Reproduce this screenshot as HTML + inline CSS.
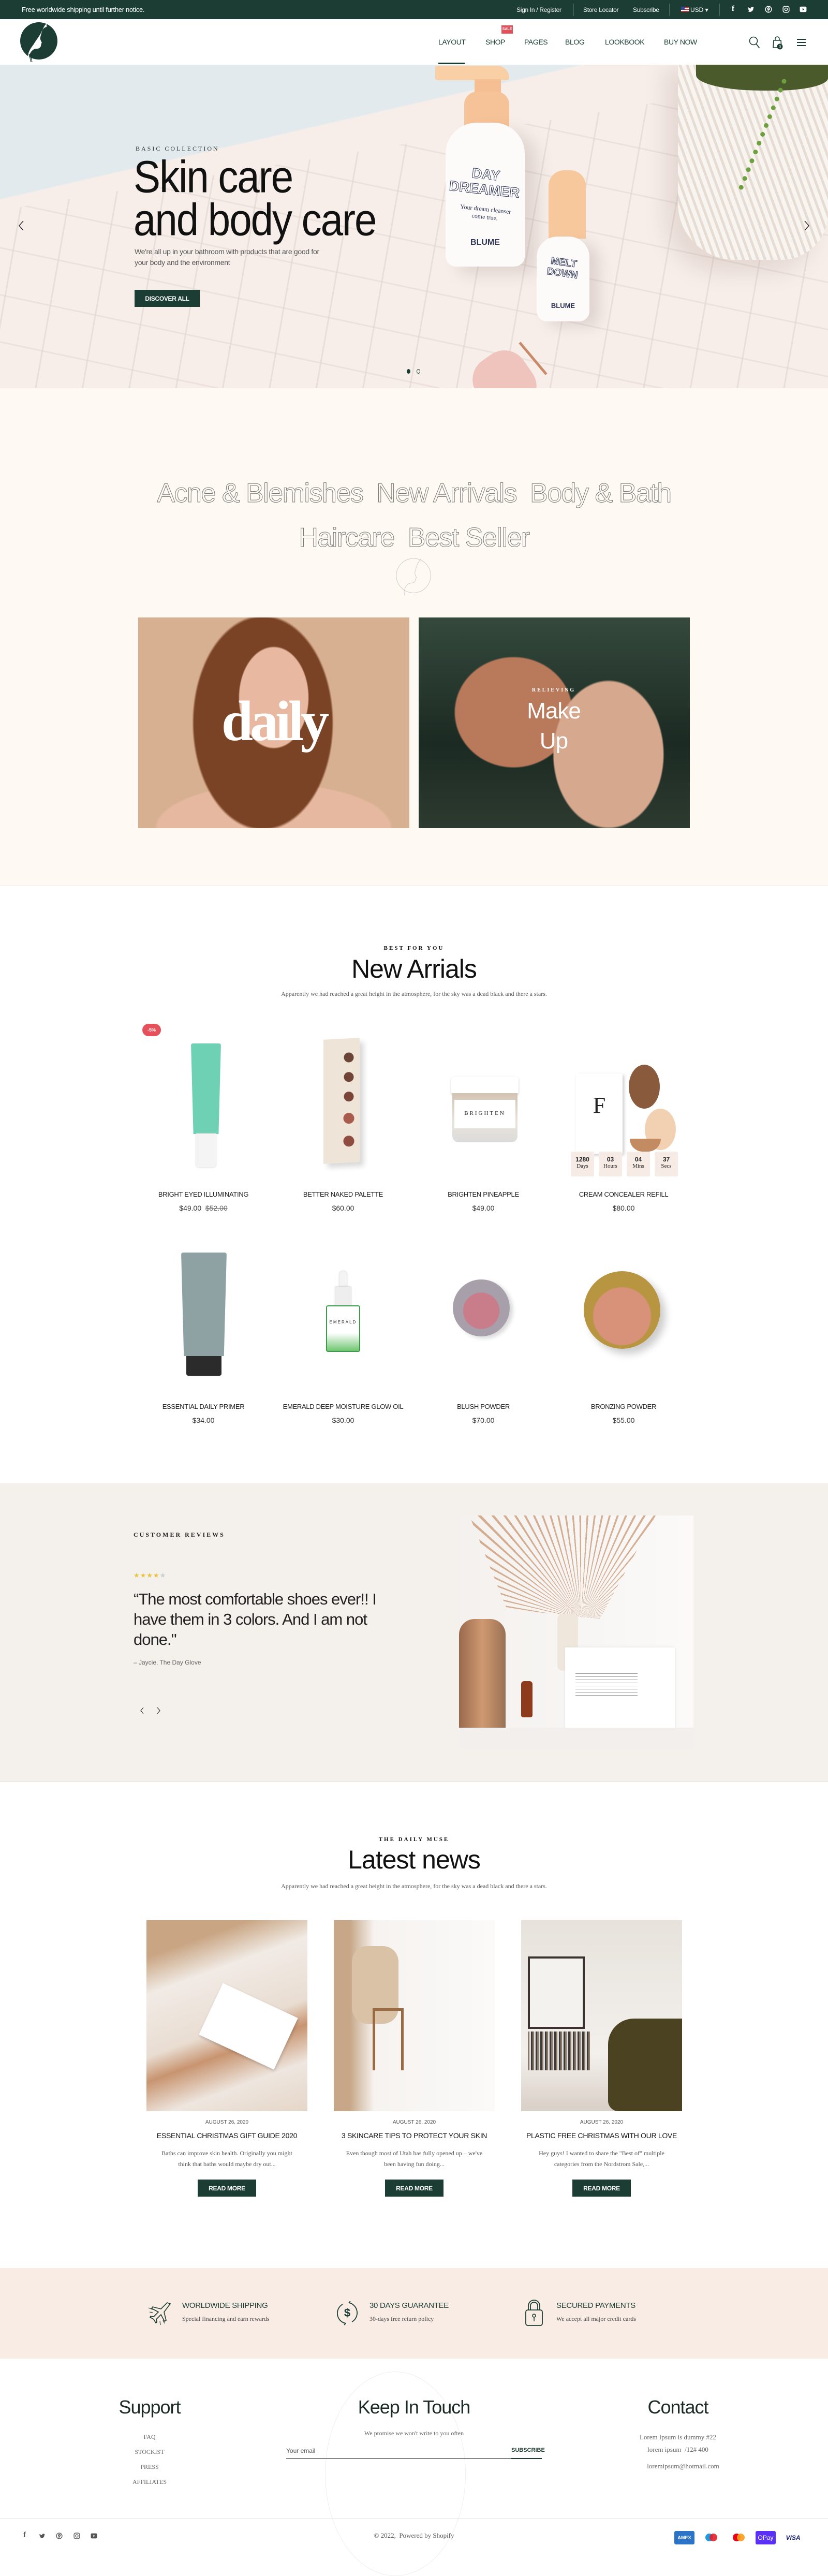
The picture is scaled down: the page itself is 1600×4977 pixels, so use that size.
<!DOCTYPE html>
<html><head><meta charset="utf-8">
<style>
*{margin:0;padding:0;box-sizing:border-box}
body{width:1600px;height:4940px;position:relative;background:#fff;font-family:"Liberation Sans",sans-serif;color:#222;overflow:hidden}
.a{position:absolute}
.c{text-align:center}
.n{font-family:"Liberation Sans",sans-serif;letter-spacing:-1px}
.btn{position:absolute;background:#1b3d33;color:#fff;font-weight:bold;font-size:12px;display:flex;align-items:center;justify-content:center;letter-spacing:-.3px}
.pn{position:absolute;width:270px;text-align:center;font-size:13px;color:#222;text-transform:uppercase;white-space:nowrap;letter-spacing:-.3px}
.pp{position:absolute;width:270px;text-align:center;font-size:14px;color:#333}
.cd{position:absolute;top:2225px;width:45px;height:48px;background:#f7ebe5;border-radius:3px;text-align:center;font-family:"Liberation Serif",serif;font-size:11px}
.cd b{display:block;margin-top:8px;font-size:12px;font-family:"Liberation Sans",sans-serif}
.ft{font-size:12px;color:#444}
.bt{position:absolute;width:331px;text-align:center;font-size:14px;color:#111;white-space:nowrap;letter-spacing:-.3px}
</style></head><body>

<!-- top bar -->
<div class="a" style="left:0;top:0;width:1600px;height:37px;background:#1b3d33"></div>
<div class="a" style="left:42px;top:11px;color:#fff;font-size:13px;letter-spacing:-.3px">Free worldwide shipping until further notice.</div>
<div class="a" style="left:998px;top:12px;color:#fff;font-size:12px;letter-spacing:-.3px">Sign In / Register</div>
<div class="a" style="left:1108px;top:7px;width:1px;height:24px;background:#4d6a60"></div>
<div class="a" style="left:1127px;top:12px;color:#fff;font-size:12px;letter-spacing:-.3px">Store Locator</div>
<div class="a" style="left:1223px;top:12px;color:#fff;font-size:12px;letter-spacing:-.3px">Subscribe</div>
<div class="a" style="left:1293px;top:7px;width:1px;height:24px;background:#4d6a60"></div>
<div class="a" style="left:1316px;top:13px;width:15px;height:10px;background:linear-gradient(#c33 0 20%,#fff 20% 40%,#c33 40% 60%,#fff 60% 80%,#c33 80%)"><div style="width:7px;height:6px;background:#2b4a9a"></div></div>
<div class="a" style="left:1334px;top:12px;color:#fff;font-size:12px">USD ▾</div>
<div class="a" style="left:1390px;top:7px;width:1px;height:24px;background:#4d6a60"></div>
<div class="a" style="left:1414px;top:9px;color:#fff;font-size:15px;font-weight:bold;font-family:'Liberation Serif',serif">f</div>
<svg class="a" style="left:1444px;top:12px" width="14" height="13" viewBox="0 0 24 24"><path fill="#fff" d="M23 5a9 9 0 0 1-2.6.7A4.5 4.5 0 0 0 22.4 3a9 9 0 0 1-2.9 1.1A4.5 4.5 0 0 0 11.8 8 12.8 12.8 0 0 1 2.5 3.3a4.5 4.5 0 0 0 1.4 6A4.5 4.5 0 0 1 1.9 8.8a4.5 4.5 0 0 0 3.6 4.4 4.5 4.5 0 0 1-2 .1 4.5 4.5 0 0 0 4.2 3.1A9 9 0 0 1 1 18.3 12.8 12.8 0 0 0 7.9 20.3c8.3 0 12.8-6.9 12.8-12.8v-.6A9 9 0 0 0 23 5z"/></svg>
<svg class="a" style="left:1478px;top:11px" width="14" height="14" viewBox="0 0 24 24"><circle cx="12" cy="12" r="10" fill="none" stroke="#fff" stroke-width="2.5"/><path d="M11 7v13" stroke="#fff" stroke-width="2.5"/><circle cx="12.5" cy="10" r="3.5" fill="none" stroke="#fff" stroke-width="2.5"/></svg>
<svg class="a" style="left:1512px;top:11px" width="14" height="14" viewBox="0 0 24 24"><rect x="2" y="2" width="20" height="20" rx="6" fill="none" stroke="#fff" stroke-width="2.5"/><circle cx="12" cy="12" r="4.5" fill="none" stroke="#fff" stroke-width="2.5"/></svg>
<svg class="a" style="left:1545px;top:12px" width="14" height="12" viewBox="0 0 24 20"><rect x="1" y="1" width="22" height="18" rx="4" fill="#fff"/><path d="M10 6v8l6-4z" fill="#1b3d33"/></svg>

<!-- header -->
<svg class="a" style="left:38px;top:42px" width="76" height="80" viewBox="0 0 76 80">
<circle cx="37" cy="37" r="36" fill="#1b3d33"/>
<path d="M52 3C44 12 42 22 40 30c-1 5 2 8 3 11-2 1-1 3-2 4 1 2-1 3-2 5-3 3-8 2-11 3-6 3-10 10-10 18 0 3 1 5 2 8-4-6-5-14-2-21 3-7 7-11 10-16 5-8 10-14 14-22 2-5 5-9 10-10z" fill="#fff"/>
<path d="M18 62l4 16M21 64l3 14" stroke="#1b3d33" stroke-width="1.2"/>
</svg>
<div class="a" style="left:969px;top:49px;width:22px;height:16px;background:#e4515a;color:#fff;font-size:7px;font-weight:bold;text-align:center;line-height:16px">SALE</div>
<div class="a" style="left:847px;top:73px;font-size:14px;color:#1b3d33;letter-spacing:-.4px">LAYOUT</div>
<div class="a" style="left:847px;top:121px;width:51px;height:3px;background:#1b3d33"></div>
<div class="a" style="left:938px;top:73px;font-size:14px;color:#1b3d33;letter-spacing:-.4px">SHOP</div>
<div class="a" style="left:1013px;top:73px;font-size:14px;color:#1b3d33;letter-spacing:-.4px">PAGES</div>
<div class="a" style="left:1092px;top:73px;font-size:14px;color:#1b3d33;letter-spacing:-.4px">BLOG</div>
<div class="a" style="left:1169px;top:73px;font-size:14px;color:#1b3d33;letter-spacing:-.4px">LOOKBOOK</div>
<div class="a" style="left:1283px;top:73px;font-size:14px;color:#1b3d33;letter-spacing:-.4px">BUY NOW</div>
<svg class="a" style="left:1447px;top:70px" width="22" height="24" viewBox="0 0 22 24"><circle cx="9" cy="9" r="7.5" fill="none" stroke="#1b3d33" stroke-width="1.6"/><path d="M14.5 15l6 8" stroke="#1b3d33" stroke-width="1.8"/></svg>
<svg class="a" style="left:1493px;top:70px" width="20" height="26" viewBox="0 0 20 26"><path d="M2 8h14l1 14H1z" fill="none" stroke="#1b3d33" stroke-width="1.6"/><path d="M5 8V5a4 4 0 0 1 8 0v3" fill="none" stroke="#1b3d33" stroke-width="1.6"/><circle cx="14" cy="20" r="5.5" fill="#1b3d33"/><text x="14" y="23" font-size="8" fill="#fff" text-anchor="middle" font-family="Liberation Sans">0</text></svg>
<div class="a" style="left:1540px;top:75px;width:17px;height:2px;background:#1b3d33;box-shadow:0 6px 0 #1b3d33,0 12px 0 #1b3d33"></div>

<!-- hero -->
<div class="a" style="left:0;top:125px;width:1600px;height:625px;background:#f5ebe5;overflow:hidden">
 <div class="a" style="left:0;top:0;width:1600px;height:625px;background:linear-gradient(167deg,#e3eaee 0 26%,#f7eee9 26.3%)"></div>
 <div class="a" style="left:0;top:0;width:1600px;height:625px;background:repeating-linear-gradient(100deg,transparent 0 86px,rgba(225,212,206,.6) 86px 89px),repeating-linear-gradient(12deg,transparent 0 86px,rgba(225,212,206,.5) 86px 89px);clip-path:polygon(0 45%,100% 3%,100% 100%,0 100%)"></div>
 <!-- pot -->
 <div class="a" style="left:1310px;top:-20px;width:290px;height:397px;border-radius:0 0 90px 110px;background:repeating-linear-gradient(70deg,#e6dcd3 0 5px,#f8f4ef 5px 13px);box-shadow:-25px 25px 40px rgba(150,120,110,.18)"></div>
 <div class="a" style="left:1345px;top:-10px;width:255px;height:60px;background:#4a5a2a;border-radius:0 0 40% 50%"></div>
 <div class="a" style="left:1420px;top:10px;width:60px;height:230px;border-right:9px dotted #6fa040;transform:rotate(22deg)"></div>
 <!-- big bottle -->
 <div class="a" style="left:841px;top:2px;width:143px;height:28px;background:#f9cfa5;border-radius:8px 40px 8px 8px"></div>
 <div class="a" style="left:917px;top:28px;width:51px;height:40px;background:#f5bf93"></div>
 <div class="a" style="left:897px;top:52px;width:87px;height:80px;background:#f6c297;border-radius:25px 25px 0 0"></div>
 <div class="a" style="left:861px;top:112px;width:153px;height:278px;background:#fcfbfa;border-radius:60px 60px 20px 20px;box-shadow:25px 15px 30px rgba(120,100,100,.18)"></div>
 <div class="a c" style="left:861px;top:198px;width:153px;font-size:27px;line-height:29px;color:#fff;-webkit-text-stroke:1px #2e3556;font-weight:bold;transform:rotate(6deg)">DAY<br>DREAMER</div>
 <div class="a c" style="left:861px;top:272px;width:153px;font-size:12px;color:#2e3556;font-family:'Liberation Serif',serif;transform:rotate(6deg)">Your dream cleanser<br>come true.</div>
 <div class="a c" style="left:861px;top:335px;width:153px;font-size:16px;color:#2e3556;font-weight:bold">BLUME</div>
 <!-- small bottle -->
 <div class="a" style="left:1060px;top:204px;width:72px;height:132px;background:#f8c89d;border-radius:30px 30px 0 0"></div>
 <div class="a" style="left:1037px;top:332px;width:102px;height:164px;background:#fcfbfa;border-radius:40px 40px 20px 20px;box-shadow:20px 10px 25px rgba(120,100,100,.18)"></div>
 <div class="a c" style="left:1037px;top:372px;width:102px;font-size:19px;line-height:21px;color:#fff;-webkit-text-stroke:1px #2e3556;font-weight:bold;transform:rotate(8deg)">MELT<br>DOWN</div>
 <div class="a c" style="left:1037px;top:458px;width:102px;font-size:13px;color:#2e3556;font-weight:bold">BLUME</div>
 <!-- roller -->
 <div class="a" style="left:920px;top:555px;width:110px;height:120px;background:#eec4bd;border-radius:45px;transform:rotate(-35deg)"></div>
 <div class="a" style="left:990px;top:565px;width:80px;height:5px;background:#c98a6a;transform:rotate(50deg)"></div>
</div>
<div class="a" style="left:262px;top:280px;font-size:12px;letter-spacing:3px;color:#333;font-family:'Liberation Serif',serif">BASIC COLLECTION</div>
<div class="a n" style="left:258px;top:300px;font-size:78px;line-height:74px;color:#111;letter-spacing:-2px;transform:scaleY(1.12);transform-origin:0 0">Skin care<br>and body care</div>
<div class="a" style="left:260px;top:476px;font-size:14px;line-height:21px;color:#555;white-space:nowrap;letter-spacing:-.3px">We're all up in your bathroom with products that are good for<br>your body and the environment</div>
<div class="btn" style="left:260px;top:560px;width:126px;height:33px">DISCOVER ALL</div>
<svg class="a" style="left:35px;top:426px" width="12" height="20" viewBox="0 0 12 20"><path d="M10 1L2 10l8 9" fill="none" stroke="#222" stroke-width="1.4"/></svg>
<svg class="a" style="left:1553px;top:426px" width="12" height="20" viewBox="0 0 12 20"><path d="M2 1l8 9-8 9" fill="none" stroke="#222" stroke-width="1.4"/></svg>
<div class="a" style="left:786px;top:713px;width:7px;height:9px;border-radius:50%;background:#1b3d33"></div>
<div class="a" style="left:805px;top:713px;width:7px;height:9px;border-radius:50%;border:1px solid #1b3d33"></div>

<!-- categories -->
<div class="a" style="left:0;top:750px;width:1600px;height:962px;background:#fef9f3;border-bottom:1px solid #e6e6ea"></div>
<div class="a c n" style="left:0;top:910px;width:1600px;font-size:52px;line-height:86px;color:transparent;-webkit-text-stroke:1px #777;letter-spacing:-1.5px">Acne &amp; Blemishes &nbsp;New Arrivals &nbsp;Body &amp; Bath<br>Haircare &nbsp;Best Seller</div>
<svg class="a" style="left:764px;top:1076px" width="72" height="78" viewBox="0 0 76 80"><circle cx="37" cy="37" r="35" fill="none" stroke="#ccc" stroke-width="1"/><path d="M52 3C44 12 42 22 40 30c-1 5 2 8 3 11-2 1-1 3-2 4 1 2-1 3-2 5-3 3-8 2-11 3-6 3-10 10-10 18 0 3 1 5 2 8" fill="none" stroke="#ccc"/></svg>
<div class="a" style="left:267px;top:1193px;width:524px;height:407px;background:radial-gradient(ellipse 110px 160px at 50% 38%,#e8b9a0 0 60%,transparent 62%),radial-gradient(ellipse 190px 290px at 46% 50%,#7a4326 0 70%,transparent 72%),radial-gradient(ellipse 320px 120px at 50% 100%,#e5b89f 0 70%,transparent 72%),#d6b091"></div>
<div class="a c" style="left:267px;top:1330px;width:524px;font-size:110px;color:#fff;font-family:'Liberation Serif',serif;letter-spacing:-6px;font-weight:bold">daily</div>
<div class="a" style="left:809px;top:1193px;width:524px;height:407px;background:radial-gradient(ellipse 150px 200px at 70% 65%,#d6a88e 0 70%,transparent 72%),radial-gradient(ellipse 160px 150px at 35% 45%,#b97a5c 0 70%,transparent 72%),linear-gradient(#35493c,#1b2a22 60%,#2d3a30)"></div>
<div class="a c" style="left:980px;top:1328px;width:180px;font-size:10px;letter-spacing:3px;color:#fff;font-weight:bold;font-family:'Liberation Serif',serif">RELIEVING</div>
<div class="a c n" style="left:980px;top:1345px;width:180px;font-size:44px;line-height:58px;color:#fff">Make<br>Up</div>

<!-- new arrivals -->
<div class="a c" style="left:0;top:1826px;width:1600px;font-size:11px;letter-spacing:3px;font-weight:bold;font-family:'Liberation Serif',serif;color:#111">BEST FOR YOU</div>
<div class="a c n" style="left:0;top:1843px;width:1600px;font-size:50px;color:#111">New Arrials</div>
<div class="a c" style="left:0;top:1913px;width:1600px;font-size:12px;color:#555;font-family:'Liberation Serif',serif">Apparently we had reached a great height in the atmosphere, for the sky was a dead black and there a stars.</div>
<div class="a" style="left:275px;top:1978px;width:36px;height:24px;border-radius:12px;background:#e4515a;color:#fff;font-size:9px;font-weight:bold;text-align:center;line-height:24px">-5%</div>
<div class="a" style="left:369px;top:2016px;width:58px;height:175px;background:#6fd1b4;border-radius:4px 4px 0 0;clip-path:polygon(0 0,100% 0,92% 100%,8% 100%)"></div>
<div class="a" style="left:379px;top:2190px;width:38px;height:65px;background:#f4f4f4;border-radius:0 0 4px 4px;box-shadow:0 0 3px #ccc"></div>
<div class="a" style="left:625px;top:2007px;width:70px;height:240px;background:#efe4d8;box-shadow:8px 8px 10px rgba(0,0,0,.15);transform:skewY(-3deg)"></div>
<div class="a" style="left:663px;top:2022px;width:22px;height:210px;background:radial-gradient(circle at 50% 10%,#6a4436 9px,transparent 10px),radial-gradient(circle at 50% 28%,#704538 9px,transparent 10px),radial-gradient(circle at 50% 46%,#7a4538 9px,transparent 10px),radial-gradient(circle at 50% 66%,#a95b4e 10px,transparent 11px),radial-gradient(circle at 50% 87%,#8e4d40 10px,transparent 11px)"></div>
<div class="a" style="left:872px;top:2080px;width:130px;height:35px;background:#fff;border-radius:6px;box-shadow:0 2px 4px #ccc"></div>
<div class="a" style="left:874px;top:2112px;width:126px;height:95px;background:linear-gradient(#d2c4b3,#e9e2da 60%,#dcdcdc);border-radius:0 0 12px 12px"></div>
<div class="a c" style="left:878px;top:2125px;width:118px;height:55px;background:#fff;font-size:11px;letter-spacing:3px;padding-top:20px;font-family:'Liberation Serif',serif">BRIGHTEN</div>
<div class="a" style="left:1113px;top:2074px;width:90px;height:155px;background:#fff;box-shadow:3px 3px 6px #ccc"></div>
<div class="a c" style="left:1113px;top:2110px;width:90px;font-size:44px;font-family:'Liberation Serif',serif">F</div>
<div class="a" style="left:1215px;top:2057px;width:60px;height:85px;border-radius:50%;background:#8a5a3c"></div>
<div class="a" style="left:1246px;top:2142px;width:60px;height:80px;border-radius:50%;background:#f2d1b3"></div>
<div class="a" style="left:1217px;top:2200px;width:60px;height:25px;border-radius:0 0 30px 30px;background:#c28b62"></div>
<div class="cd" style="left:1103px"><b>1280</b>Days</div>
<div class="cd" style="left:1157px"><b>03</b>Hours</div>
<div class="cd" style="left:1211px"><b>04</b>Mins</div>
<div class="cd" style="left:1265px"><b>37</b>Secs</div>
<div class="pn" style="left:258px;top:2300px">Bright Eyed Illuminating</div>
<div class="pp" style="left:258px;top:2326px">$49.00 &nbsp;<s style="color:#666">$52.00</s></div>
<div class="pn" style="left:528px;top:2300px">Better Naked Palette</div>
<div class="pp" style="left:528px;top:2326px">$60.00</div>
<div class="pn" style="left:799px;top:2300px">Brighten Pineapple</div>
<div class="pp" style="left:799px;top:2326px">$49.00</div>
<div class="pn" style="left:1070px;top:2300px">Cream Concealer Refill</div>
<div class="pp" style="left:1070px;top:2326px">$80.00</div>
<div class="a" style="left:350px;top:2420px;width:88px;height:200px;background:#8ea2a4;border-radius:4px 4px 0 0;clip-path:polygon(0 0,100% 0,94% 100%,6% 100%)"></div>
<div class="a" style="left:360px;top:2620px;width:68px;height:38px;background:#2b2b2b;border-radius:0 0 4px 4px"></div>
<div class="a" style="left:656px;top:2456px;width:14px;height:30px;background:#f4f4f4;border-radius:7px 7px 0 0;box-shadow:0 0 3px #bbb"></div>
<div class="a" style="left:648px;top:2486px;width:30px;height:40px;background:#eee;box-shadow:0 0 3px #bbb"></div>
<div class="a" style="left:630px;top:2522px;width:66px;height:90px;background:linear-gradient(#fff 0 60%,#6fc66f);border:2px solid #3a9c4a;border-radius:4px"></div>
<div class="a c" style="left:630px;top:2550px;width:66px;font-size:8px;letter-spacing:2px">EMERALD</div>
<div class="a" style="left:875px;top:2472px;width:110px;height:110px;border-radius:50%;background:radial-gradient(circle at 50% 55%,#c97c8a 0 42%,#a7a0ab 44%);box-shadow:6px 4px 8px rgba(0,0,0,.15)"></div>
<div class="a" style="left:1128px;top:2456px;width:148px;height:150px;border-radius:50%;background:radial-gradient(circle at 50% 58%,#d8927a 0 48%,#b89540 50%);box-shadow:10px 10px 15px rgba(0,0,0,.2)"></div>
<div class="pn" style="left:258px;top:2710px">Essential Daily Primer</div>
<div class="pp" style="left:258px;top:2736px">$34.00</div>
<div class="pn" style="left:528px;top:2710px">Emerald Deep Moisture Glow Oil</div>
<div class="pp" style="left:528px;top:2736px">$30.00</div>
<div class="pn" style="left:799px;top:2710px">Blush Powder</div>
<div class="pp" style="left:799px;top:2736px">$70.00</div>
<div class="pn" style="left:1070px;top:2710px">Bronzing Powder</div>
<div class="pp" style="left:1070px;top:2736px">$55.00</div>

<!-- testimonial -->
<div class="a" style="left:0;top:2866px;width:1600px;height:577px;background:#f4f0eb;border-bottom:1px solid #e6e4e4"></div>
<div class="a" style="left:258px;top:2958px;font-size:12px;letter-spacing:3px;font-weight:bold;font-family:'Liberation Serif',serif">CUSTOMER REVIEWS</div>
<div class="a" style="left:258px;top:3036px;font-size:13px;color:#e8c23a;letter-spacing:1px">★★★★<span style="color:#ccc">★</span></div>
<div class="a n" style="left:258px;top:3070px;width:520px;font-size:31px;line-height:39px;color:#222">“The most comfortable shoes ever!! I have them in 3 colors. And I am not done."</div>
<div class="a" style="left:258px;top:3205px;font-size:12px;color:#666">– Jaycie, The Day Glove</div>
<svg class="a" style="left:270px;top:3298px" width="8" height="14" viewBox="0 0 8 14"><path d="M7 1L2 7l5 6" fill="none" stroke="#333" stroke-width="1.2"/></svg>
<svg class="a" style="left:303px;top:3298px" width="8" height="14" viewBox="0 0 8 14"><path d="M1 1l5 6-5 6" fill="none" stroke="#333" stroke-width="1.2"/></svg>
<div class="a" style="left:887px;top:2928px;width:453px;height:453px;background:linear-gradient(90deg,#f4f1ee,#fbfaf9);overflow:hidden">
 <div class="a" style="left:0;top:200px;width:90px;height:250px;background:linear-gradient(90deg,#8a5230,#c88a5c,#8a5a3a);border-radius:30px 30px 20px 20px;opacity:.85"></div>
 <div class="a" style="left:20px;top:0;width:360px;height:200px;background:repeating-conic-gradient(from 200deg at 60% 100%,transparent 0 3deg,rgba(190,125,80,.6) 3deg 4deg);clip-path:polygon(0 0,100% 0,70% 100%,20% 90%)"></div>
 <div class="a" style="left:190px;top:190px;width:40px;height:110px;background:#efe6dc;border-radius:10px"></div>
 <div class="a" style="left:120px;top:320px;width:22px;height:70px;background:#8e3a1c;border-radius:6px 6px 4px 4px"></div>
 <div class="a" style="left:205px;top:255px;width:212px;height:232px;background:#fff;box-shadow:0 0 4px #ddd"></div>
 <div class="a" style="left:225px;top:300px;width:120px;height:50px;background:repeating-linear-gradient(#fff 0 5px,#999 5px 6px)"></div>
 <div class="a" style="left:0;top:410px;width:453px;height:43px;background:#f2efec"></div>
</div>

<!-- latest news -->
<div class="a c" style="left:0;top:3548px;width:1600px;font-size:11px;letter-spacing:3px;font-weight:bold;font-family:'Liberation Serif',serif;color:#111">THE DAILY MUSE</div>
<div class="a c n" style="left:0;top:3564px;width:1600px;font-size:50px;color:#111">Latest news</div>
<div class="a c" style="left:0;top:3637px;width:1600px;font-size:12px;color:#555;font-family:'Liberation Serif',serif">Apparently we had reached a great height in the atmosphere, for the sky was a dead black and there a stars.</div>
<div class="a" style="left:283px;top:3710px;width:311px;height:369px;background:linear-gradient(160deg,#c9a583 0 15%,#f1ebe5 30%,#e9ddd2 55%,#c89470 65%,#eee6df 80%,#e5d6c8)"></div>
<div class="a" style="left:400px;top:3860px;width:160px;height:110px;background:#fff;transform:rotate(25deg);box-shadow:2px 2px 6px rgba(0,0,0,.2)"></div>
<div class="a" style="left:645px;top:3710px;width:311px;height:369px;background:linear-gradient(90deg,#c7a788 0 10%,#f6f3f0 25%,#fbfaf9)"></div>
<div class="a" style="left:680px;top:3760px;width:90px;height:150px;background:#d9c2a6;border-radius:30px"></div>
<div class="a" style="left:720px;top:3880px;width:60px;height:120px;border:5px solid #9a6a43;border-bottom:none"></div>
<div class="a" style="left:1007px;top:3710px;width:311px;height:369px;background:linear-gradient(#e7e2dc,#f3f0ec 70%,#d8cfc6)"></div>
<div class="a" style="left:1020px;top:3780px;width:110px;height:140px;border:4px solid #3b3230;background:#f4f2ef"></div>
<div class="a" style="left:1020px;top:3925px;width:120px;height:75px;background:repeating-linear-gradient(90deg,#8a7a6a 0 3px,#ddd 3px 6px,#3e3935 6px 9px)"></div>
<div class="a" style="left:1175px;top:3900px;width:143px;height:179px;background:#4b4222;border-radius:50px 0 0 20px"></div>
<div class="a c" style="left:283px;top:4095px;width:311px;font-size:10px;color:#555">AUGUST 26, 2020</div>
<div class="bt" style="left:273px;top:4118px">ESSENTIAL CHRISTMAS GIFT GUIDE 2020</div>
<div class="a c" style="left:283px;top:4150px;width:311px;font-size:12px;line-height:21px;color:#555;font-family:'Liberation Serif',serif">Baths can improve skin health. Originally you might<br>think that baths would maybe dry out...</div>
<div class="btn" style="left:382px;top:4211px;width:113px;height:33px">READ MORE</div>
<div class="a c" style="left:645px;top:4095px;width:311px;font-size:10px;color:#555">AUGUST 26, 2020</div>
<div class="bt" style="left:635px;top:4118px">3 SKINCARE TIPS TO PROTECT YOUR SKIN</div>
<div class="a c" style="left:645px;top:4150px;width:311px;font-size:12px;line-height:21px;color:#555;font-family:'Liberation Serif',serif">Even though most of Utah has fully opened up – we've<br>been having fun doing...</div>
<div class="btn" style="left:744px;top:4211px;width:113px;height:33px">READ MORE</div>
<div class="a c" style="left:1007px;top:4095px;width:311px;font-size:10px;color:#555">AUGUST 26, 2020</div>
<div class="bt" style="left:997px;top:4118px">PLASTIC FREE CHRISTMAS WITH OUR LOVE</div>
<div class="a c" style="left:1007px;top:4150px;width:311px;font-size:12px;line-height:21px;color:#555;font-family:'Liberation Serif',serif">Hey guys! I wanted to share the "Best of" multiple<br>categories from the Nordstrom Sale,...</div>
<div class="btn" style="left:1106px;top:4211px;width:113px;height:33px">READ MORE</div>

<!-- features -->
<div class="a" style="left:0;top:4382px;width:1600px;height:175px;background:#f9ece4"></div>
<svg class="a" style="left:285px;top:4445px" width="48" height="48" viewBox="0 0 48 48"><path d="M38 4l6 2-12 16 4 16-3 2-7-13-9 9 1 6-2 1-4-7-7-4 1-2 6 1 9-9-13-7 2-3 16 4z" fill="none" stroke="#1b3d33" stroke-width="1.6"/><path d="M2 14l8 3M4 22l6 1M24 40l1 7M30 38l3 6" stroke="#1b3d33" stroke-width="1.2"/></svg>
<div class="a" style="left:352px;top:4446px;font-size:15px;color:#1b3d33;letter-spacing:-.3px">WORLDWIDE SHIPPING</div>
<div class="a ft" style="left:352px;top:4473px;font-family:'Liberation Serif',serif">Special financing and earn rewards</div>
<svg class="a" style="left:648px;top:4444px" width="46" height="50" viewBox="0 0 46 50"><path d="M14 8A20 20 0 0 0 20 45M32 42A20 20 0 0 0 26 5" fill="none" stroke="#1b3d33" stroke-width="1.8"/><path d="M20 45l-5-2M20 45l-3 3M26 5l5 1M26 5l3-3" stroke="#1b3d33" stroke-width="1.6"/><text x="23" y="32" text-anchor="middle" font-size="22" font-family="Liberation Sans" font-weight="bold" fill="#1b3d33">$</text></svg>
<div class="a" style="left:714px;top:4446px;font-size:15px;color:#1b3d33;letter-spacing:-.3px">30 DAYS GUARANTEE</div>
<div class="a ft" style="left:714px;top:4473px;font-family:'Liberation Serif',serif">30-days free return policy</div>
<svg class="a" style="left:1014px;top:4441px" width="36" height="54" viewBox="0 0 36 54"><path d="M7 22V14a11 11 0 0 1 22 0v8M11 22v-8a7 7 0 0 1 14 0v8" fill="none" stroke="#1b3d33" stroke-width="1.8"/><rect x="2" y="22" width="32" height="30" rx="4" fill="none" stroke="#1b3d33" stroke-width="1.8"/><circle cx="18" cy="33" r="3" fill="none" stroke="#1b3d33" stroke-width="1.6"/><path d="M18 36v8" stroke="#1b3d33" stroke-width="1.6"/></svg>
<div class="a" style="left:1075px;top:4446px;font-size:15px;color:#1b3d33;letter-spacing:-.3px">SECURED PAYMENTS</div>
<div class="a ft" style="left:1075px;top:4473px;font-family:'Liberation Serif',serif">We accept all major credit cards</div>

<!-- footer -->
<div class="a" style="left:628px;top:4582px;width:272px;height:395px;border:1px solid #f0eeee;border-radius:50%"></div>
<div class="a c n" style="left:139px;top:4630px;width:300px;font-size:36px;color:#1b2a26">Support</div>
<div class="a c" style="left:189px;top:4694px;width:200px;font-size:12px;line-height:29px;color:#666;font-family:'Liberation Serif',serif">FAQ<br>STOCKIST<br>PRESS<br>AFFILIATES</div>
<div class="a c n" style="left:600px;top:4630px;width:400px;font-size:36px;color:#1b2a26">Keep In Touch</div>
<div class="a c" style="left:600px;top:4694px;width:400px;font-size:12px;color:#666;font-family:'Liberation Serif',serif">We promise we won't write to you often</div>
<div class="a" style="left:553px;top:4728px;font-size:12px;color:#555">Your email</div>
<div class="a" style="left:988px;top:4728px;font-size:11px;font-weight:bold;color:#1b3d33">SUBSCRIBE</div>
<div class="a" style="left:553px;top:4749px;width:494px;height:2px;background:#888"></div>
<div class="a" style="left:988px;top:4749px;width:59px;height:2px;background:#1b3d33"></div>
<div class="a c n" style="left:1160px;top:4630px;width:300px;font-size:36px;color:#1b2a26">Contact</div>
<div class="a c" style="left:1160px;top:4697px;width:300px;font-size:13px;line-height:24px;color:#666;font-family:'Liberation Serif',serif">Lorem Ipsum is dummy #22<br>lorem ipsum &nbsp;/12# 400</div>
<div class="a c" style="left:1170px;top:4757px;width:300px;font-size:13px;color:#666;font-family:'Liberation Serif',serif">loremipsum@hotmail.com</div>
<div class="a" style="left:0;top:4865px;width:1600px;height:1px;background:#e8e8e8"></div>
<div class="a" style="left:45px;top:4890px;font-size:15px;color:#555;font-family:'Liberation Serif',serif;font-weight:bold">f</div>
<svg class="a" style="left:75px;top:4894px" width="13" height="12" viewBox="0 0 24 24"><path fill="#555" d="M23 5a9 9 0 0 1-2.6.7A4.5 4.5 0 0 0 22.4 3a9 9 0 0 1-2.9 1.1A4.5 4.5 0 0 0 11.8 8 12.8 12.8 0 0 1 2.5 3.3a4.5 4.5 0 0 0 1.4 6A4.5 4.5 0 0 1 1.9 8.8a4.5 4.5 0 0 0 3.6 4.4 4.5 4.5 0 0 1-2 .1 4.5 4.5 0 0 0 4.2 3.1A9 9 0 0 1 1 18.3 12.8 12.8 0 0 0 7.9 20.3c8.3 0 12.8-6.9 12.8-12.8v-.6A9 9 0 0 0 23 5z"/></svg>
<svg class="a" style="left:108px;top:4893px" width="13" height="13" viewBox="0 0 24 24"><circle cx="12" cy="12" r="10" fill="none" stroke="#555" stroke-width="2.5"/><path d="M11 7v13" stroke="#555" stroke-width="2.5"/><circle cx="12.5" cy="10" r="3.5" fill="none" stroke="#555" stroke-width="2.5"/></svg>
<svg class="a" style="left:142px;top:4893px" width="13" height="13" viewBox="0 0 24 24"><rect x="2" y="2" width="20" height="20" rx="6" fill="none" stroke="#555" stroke-width="2.5"/><circle cx="12" cy="12" r="4.5" fill="none" stroke="#555" stroke-width="2.5"/></svg>
<svg class="a" style="left:175px;top:4894px" width="13" height="11" viewBox="0 0 24 20"><rect x="1" y="1" width="22" height="18" rx="4" fill="#555"/><path d="M10 6v8l6-4z" fill="#fff"/></svg>
<div class="a c" style="left:600px;top:4891px;width:400px;font-size:13px;color:#555;font-family:'Liberation Serif',serif">© 2022, &nbsp;Powered by Shopify</div>
<div class="a" style="left:1303px;top:4890px;width:39px;height:26px;background:#2a73c6;border-radius:3px;color:#fff;font-size:9px;font-weight:bold;text-align:center;line-height:26px">AMEX</div>
<div class="a" style="left:1355px;top:4890px;width:39px;height:26px;background:#fff;border-radius:3px"><div class="a" style="left:8px;top:5px;width:15px;height:15px;border-radius:50%;background:#1d9be0"></div><div class="a" style="left:16px;top:5px;width:15px;height:15px;border-radius:50%;background:rgba(230,30,40,.9)"></div></div>
<div class="a" style="left:1408px;top:4890px;width:39px;height:26px;background:#fff;border-radius:3px"><div class="a" style="left:8px;top:5px;width:15px;height:15px;border-radius:50%;background:#eb001b"></div><div class="a" style="left:16px;top:5px;width:15px;height:15px;border-radius:50%;background:rgba(247,158,27,.9)"></div></div>
<div class="a" style="left:1460px;top:4890px;width:39px;height:26px;background:#5a31f4;border-radius:3px;color:#fff;font-size:12px;text-align:center;line-height:26px">OPay</div>
<div class="a" style="left:1513px;top:4890px;width:39px;height:26px;background:#fff;border-radius:3px;color:#1a1f71;font-size:12px;font-weight:bold;font-style:italic;text-align:center;line-height:26px">VISA</div>
</body></html>
